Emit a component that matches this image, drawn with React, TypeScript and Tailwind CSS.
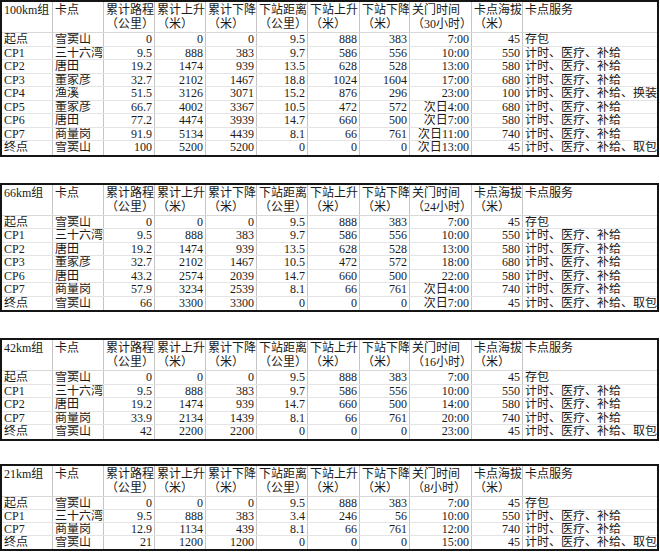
import React from 'react';

type Row = string[];

interface TableProps {
  group: string;
  hours: string;
  rows: Row[];
  rowClass: string;
  className?: string;
}

const COLS = 'grid grid-cols-[51px_51px_51px_51px_51px_51px_52px_50px_62px_51px_1fr]';

const HEAD: (string | [string, string])[] = [
  '',
  '卡点',
  ['累计路程', '（公里）'],
  ['累计上升', '（米）'],
  ['累计下降', '（米）'],
  ['下站距离', '（公里）'],
  ['下站上升', '（米）'],
  ['下站下降', '（米）'],
  ['关门时间', ''],
  ['卡点海拔', '（米）'],
  '卡点服务',
];

const S3 = '计时、医疗、补给';

const T100: Row[] = [
  ['起点', '雪窦山', '0', '0', '0', '9.5', '888', '383', '7:00', '45', '存包'],
  ['CP1', '三十六湾', '9.5', '888', '383', '9.7', '586', '556', '10:00', '550', S3],
  ['CP2', '唐田', '19.2', '1474', '939', '13.5', '628', '528', '13:00', '580', S3],
  ['CP3', '董家彦', '32.7', '2102', '1467', '18.8', '1024', '1604', '17:00', '680', S3],
  ['CP4', '渔溪', '51.5', '3126', '3071', '15.2', '876', '296', '23:00', '100', '计时、医疗、补给、换装'],
  ['CP5', '董家彦', '66.7', '4002', '3367', '10.5', '472', '572', '次日4:00', '680', S3],
  ['CP6', '唐田', '77.2', '4474', '3939', '14.7', '660', '500', '次日7:00', '580', S3],
  ['CP7', '商量岗', '91.9', '5134', '4439', '8.1', '66', '761', '次日11:00', '740', S3],
  ['终点', '雪窦山', '100', '5200', '5200', '0', '0', '0', '次日13:00', '45', '计时、医疗、补给、取包'],
];

const T66: Row[] = [
  ['起点', '雪窦山', '0', '0', '0', '9.5', '888', '383', '7:00', '45', '存包'],
  ['CP1', '三十六湾', '9.5', '888', '383', '9.7', '586', '556', '10:00', '550', S3],
  ['CP2', '唐田', '19.2', '1474', '939', '13.5', '628', '528', '13:00', '580', S3],
  ['CP3', '董家彦', '32.7', '2102', '1467', '10.5', '472', '572', '18:00', '680', S3],
  ['CP6', '唐田', '43.2', '2574', '2039', '14.7', '660', '500', '22:00', '580', S3],
  ['CP7', '商量岗', '57.9', '3234', '2539', '8.1', '66', '761', '次日4:00', '740', S3],
  ['终点', '雪窦山', '66', '3300', '3300', '0', '0', '0', '次日7:00', '45', '计时、医疗、补给、取包'],
];

const T42: Row[] = [
  ['起点', '雪窦山', '0', '0', '0', '9.5', '888', '383', '7:00', '45', '存包'],
  ['CP1', '三十六湾', '9.5', '888', '383', '9.7', '586', '556', '10:00', '550', S3],
  ['CP2', '唐田', '19.2', '1474', '939', '14.7', '660', '500', '14:00', '580', S3],
  ['CP7', '商量岗', '33.9', '2134', '1439', '8.1', '66', '761', '20:00', '740', S3],
  ['终点', '雪窦山', '42', '2200', '2200', '0', '0', '0', '23:00', '45', '计时、医疗、补给、取包'],
];

const T21: Row[] = [
  ['起点', '雪窦山', '0', '0', '0', '9.5', '888', '383', '7:00', '45', '存包'],
  ['CP1', '三十六湾', '9.5', '888', '383', '3.4', '246', '56', '10:00', '550', S3],
  ['CP7', '商量岗', '12.9', '1134', '439', '8.1', '66', '761', '12:00', '740', S3],
  ['终点', '雪窦山', '21', '1200', '1200', '0', '0', '0', '15:00', '45', '计时、医疗、补给、取包'],
];

const SheetTable: React.FC<TableProps> = ({ group, hours, rows, rowClass, className }) => {
  return (
    <div className={`w-[659px] border-2 border-[#151515] bg-white ${className ?? ''}`}>
      <div className={`${COLS} h-[31px] border-b border-[#d8d8d8]`}>
        {HEAD.map((h, i) => {
          const last = i === HEAD.length - 1;
          const cell = `pl-[2px] pt-[1px] leading-[14px] whitespace-nowrap overflow-hidden ${last ? '' : 'border-r border-[#c4c4c4]'}`;
          if (i === 0) return <div key={i} className={cell}>{group}</div>;
          if (typeof h === 'string') return <div key={i} className={cell}>{h}</div>;
          return (
            <div key={i} className={cell}>
              <div>{h[0]}</div>
              <div>{i === 8 ? `（${hours}小时）` : h[1]}</div>
            </div>
          );
        })}
      </div>
      {rows.map((r, ri) => (
        <div
          key={ri}
          className={`${COLS} ${rowClass} ${ri < rows.length - 1 ? 'border-b border-[#e4e4e4]' : ''}`}
        >
          {r.map((c, ci) => {
            const last = ci === r.length - 1;
            const num = ci >= 2 && ci <= 9;
            return (
              <div
                key={ci}
                className={`whitespace-nowrap overflow-hidden ${num ? 'text-right pr-[2px]' : 'pl-[2px]'} ${last ? 'pl-[1px]' : 'border-r border-[#c4c4c4]'}`}
              >
                {c}
              </div>
            );
          })}
        </div>
      ))}
    </div>
  );
};

export default function App() {
  return (
    <div className="w-[660px] h-[552px] overflow-hidden bg-white text-[12px] text-[#1a1a1a] font-['Liberation_Serif','Noto_Sans_CJK_SC',serif]">
      <SheetTable group="100km组" hours="30" rows={T100} rowClass="h-[13.5px] leading-[13.5px]" />
      <SheetTable group="66km组" hours="24" rows={T66} rowClass="h-[13.5px] leading-[13.5px]" className="mt-[26px]" />
      <SheetTable group="42km组" hours="16" rows={T42} rowClass="h-[13.5px] leading-[13.5px]" className="mt-[26px]" />
      <SheetTable group="21km组" hours="8" rows={T21} rowClass="h-[13px] leading-[13px]" className="mt-[23px]" />
    </div>
  );
}
